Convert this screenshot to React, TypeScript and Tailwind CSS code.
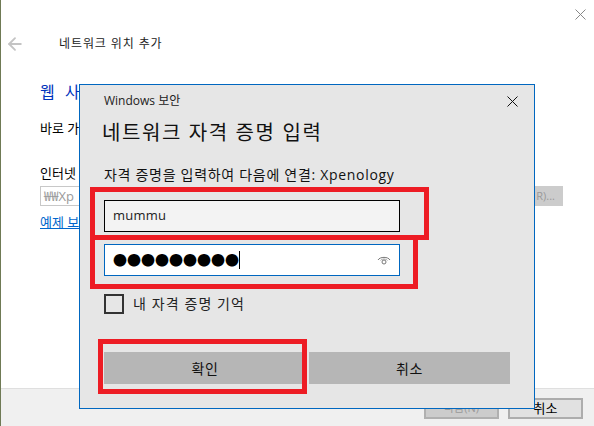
import { ArrowLeft } from 'lucide-react';

const FONT = "font-['Open_Sans','Noto_Sans_CJK_KR',sans-serif]";

function CloseIcon({ className }: { className: string }) {
  return (
    <svg width="11" height="11" viewBox="0 0 11 11" className={className}>
      <path d="M0.5 0.5L10.5 10.5M10.5 0.5L0.5 10.5" stroke="currentColor" strokeWidth="1" fill="none" />
    </svg>
  );
}

function EyeIcon() {
  return (
    <svg width="14" height="10" viewBox="0 0 14 10" className="text-[#777]">
      <path d="M1 5C3 1.5 11 1.5 13 5" stroke="currentColor" fill="none" />
      <path d="M3.5 5.5C5 3.5 9 3.5 10.500 5.500" stroke="currentColor" fill="none" opacity="0.6" />
      <circle cx="7" cy="7" r="2" stroke="currentColor" fill="none" />
    </svg>
  );
}

function BackgroundWindow() {
  return (
    <div className="flex h-full flex-col bg-white">
      <div className="relative flex-1 pl-[39px]">
        <div className="flex h-[30px] items-start justify-end pr-[8px] pt-[9px]">
          <CloseIcon className="text-[#888]" />
        </div>
        <div className="ml-[-35px] flex items-center gap-[34px] pt-[4px]">
          <ArrowLeft size={20} strokeWidth={2.2} className="text-[#c4c4c4]" />
          <span className="text-[12px] leading-[18px] tracking-[0.9px] text-[#222]">네트워크 위치 추가</span>
        </div>
        <p className="pt-[27px] text-[16px] leading-[22px] tracking-[3px] text-[#0033bc]">웹 사</p>
        <p className="pt-[16px] text-[13px] leading-[18px] text-black">바로 가</p>
        <p className="pt-[27px] text-[13px] leading-[18px] text-black">인터넷</p>
        <div className="mt-[4px] flex items-stretch gap-[1px] pr-[31px]">
          <div className="h-[20px] flex-1 border border-[#c8c8c8] px-[3px] text-[13px] leading-[18px] text-[#9a9a9a]">
            ₩₩Xp
          </div>
          <div className="flex h-[20px] w-[60px] items-center justify-end bg-[#cccccc] pr-[8px] text-[11px] text-[#9a9a9a]">
            R)...
          </div>
        </div>
        <p className="pt-[7px] text-[13px] leading-[18px] text-[#0066cc] underline">예제 보</p>
      </div>
      <div className="flex h-[38px] items-start justify-end gap-[9px] border-t border-[#dfdfdf] bg-[#f0f0f0] pr-[11px] pt-[9px]">
        <div className="flex h-[21px] w-[75px] items-center justify-center border-2 border-[#b0b0b0] bg-[#cccccc] text-[11px] text-[#9a9a9a]">
          다음(N)
        </div>
        <div className="flex h-[21px] w-[75px] items-center justify-center border-2 border-[#adadad] bg-[#e1e1e1] text-[13px] text-black">
          취소
        </div>
      </div>
    </div>
  );
}

function CredentialDialog() {
  return (
    <div className="absolute left-[79px] top-[84px] flex h-[325px] w-[456px] flex-col border border-[#0067c0] bg-[#e6e6e6] pl-[24px] pr-[24px]">
      <div className="flex items-center justify-between pt-[7px]">
        <span className="text-[12px] leading-[18px] text-[#222]">Windows 보안</span>
        <CloseIcon className="mr-[-8px] text-[#111]" />
      </div>
      <h1 className="mt-[9px] ml-[-2px] text-[20px] font-normal leading-[28px] tracking-[1.6px] text-[#111]">
        네트워크 자격 증명 입력
      </h1>
      <p className="mt-[18px] text-[14px] leading-[20px] tracking-[0.7px] text-[#111]">
        자격 증명을 입력하여 다음에 연결: Xpenology
      </p>
      <div className="mt-[15px] flex h-[32px] w-[296px] items-center border border-black bg-[#f3f3f3] px-[8px] text-[13px] tracking-[0.2px] text-[#222]">
        mummu
      </div>
      <div className="mt-[12px] flex h-[32px] w-[296px] items-center justify-between border border-[#0067c0] bg-white pl-[8px] pr-[8px]">
        <div className="flex items-center">
          <span className="text-[14px] leading-none text-black">●●●●●●●●●</span>
          <span className="h-[18px] w-px bg-black" />
        </div>
        <EyeIcon />
      </div>
      <div className="mt-[18px] flex items-center gap-[9px]">
        <div className="h-[20px] w-[20px] border-2 border-[#333]" />
        <span className="text-[14px] leading-[18px] tracking-[1.1px] text-[#222]">내 자격 증명 기억</span>
      </div>
      <div className="mt-[38px] flex gap-[3px]">
        <div className="flex h-[32px] w-[202px] items-center justify-center bg-[#b6b6b6] text-[14px] tracking-[0.5px] text-[#111]">확인</div>
        <div className="flex h-[32px] w-[201px] items-center justify-center bg-[#b6b6b6] text-[14px] tracking-[0.5px] text-[#111]">취소</div>
      </div>
    </div>
  );
}

export default function App() {
  return (
    <div className={`relative h-[426px] w-[594px] overflow-hidden bg-white ${FONT}`}>
      <div className="flex h-full">
        <div className="w-px bg-[#6f7a55]" />
        <div className="flex-1">
          <BackgroundWindow />
        </div>
      </div>
      <CredentialDialog />
      {/* red annotation boxes */}
      <div className="absolute left-[90px] top-[187px] h-[53px] w-[339px] border-[5px] border-[#ed1c24]" />
      <div className="absolute left-[90px] top-[235px] h-[54px] w-[328px] border-[5px] border-[#ed1c24]" />
      <div className="absolute left-[98px] top-[339px] h-[55px] w-[209px] border-[5px] border-[#ed1c24]" />
    </div>
  );
}
